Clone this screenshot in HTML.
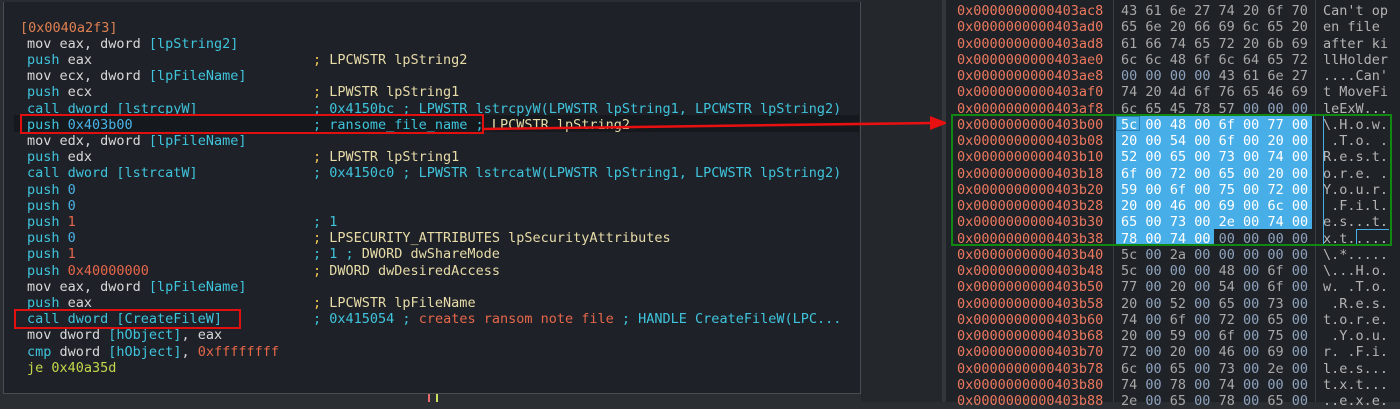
<!DOCTYPE html>
<html><head><meta charset="utf-8"><style>
html,body{margin:0;padding:0;}
body{width:1400px;height:402px;background:#2a2d31;position:relative;overflow:hidden;font-family:"DejaVu Sans Mono","Liberation Mono",monospace;font-size:13.5px;}
.panel{position:absolute;left:3px;top:2px;width:856px;height:391px;background:#1e2128;border:1px solid #4a4d52;border-top:none;}
.l{position:absolute;left:0;white-space:pre;line-height:16px;height:16px;color:#d8d8d8;}
.c{position:absolute;left:313px;white-space:pre;line-height:16px;color:#e8dca8;}
.cy{color:#3fc4dc}.w{color:#d8d8d8}.o{color:#e6674a}.y{color:#f0c850}.cr{color:#e8dca8}.b{color:#4ab3e6}.g{color:#c4d84a}
.hex{position:absolute;left:946px;top:0;width:454px;height:402px;background:#1f2226;}
.row{position:absolute;white-space:pre;line-height:16px;}
.a{left:957px;color:#ec7860}
.h{left:1121px;color:#a8a8a8}
.t{left:1323px;color:#b4b4b4}
.z{color:#8ea2be}
#code{position:absolute;left:0;top:2px;}
</style></head><body>
<div style="position:absolute;left:861px;top:0;width:82px;height:402px;background:#24272b"></div>
<div style="position:absolute;left:942px;top:0;width:4px;height:402px;background:#33363a"></div>
<div class="panel"></div>
<div style="position:absolute;left:14px;top:115px;width:845px;height:17px;background:#15181c"></div>
<div style="position:absolute;left:428px;top:394px;width:2px;height:8px;background:#e86a6a"></div>
<div style="position:absolute;left:436px;top:394px;width:2px;height:8px;background:#d0e060"></div>
<div id="code">
<div class="l" style="top:18px;left:20px;color:#e08050">[0x0040a2f3]</div>
<div class="l" style="top:34px;left:27px">mov eax, dword <span class="cy">[lpString2]</span></div>
<div class="l" style="top:50px;left:27px"><span class="cy">push</span> eax</div>
<div class="c" style="top:50px"><span class="y">;</span> LPCWSTR lpString2</div>
<div class="l" style="top:66px;left:27px">mov ecx, dword <span class="cy">[lpFileName]</span></div>
<div class="l" style="top:82px;left:27px"><span class="cy">push</span> ecx</div>
<div class="c" style="top:82px"><span class="y">;</span> LPWSTR lpString1</div>
<div class="l" style="top:99px;left:27px"><span class="cy">call dword [lstrcpyW]</span></div>
<div class="c cy" style="top:99px">; 0x4150bc ; LPWSTR lstrcpyW(LPWSTR lpString1, LPCWSTR lpString2)</div>
<div class="l" style="top:115px;left:27px"><span class="cy">push</span> <span class="b">0x403b00</span></div>
<div class="c" style="top:115px"><span class="cy">; ransome_file_name ;</span> LPCWSTR lpString2</div>
<div class="l" style="top:131px;left:27px">mov edx, dword <span class="cy">[lpFileName]</span></div>
<div class="l" style="top:147px;left:27px"><span class="cy">push</span> edx</div>
<div class="c" style="top:147px"><span class="y">;</span> LPWSTR lpString1</div>
<div class="l" style="top:163px;left:27px"><span class="cy">call dword [lstrcatW]</span></div>
<div class="c cy" style="top:163px">; 0x4150c0 ; LPWSTR lstrcatW(LPWSTR lpString1, LPCWSTR lpString2)</div>
<div class="l" style="top:180px;left:27px"><span class="cy">push</span> <span class="b">0</span></div>
<div class="l" style="top:196px;left:27px"><span class="cy">push</span> <span class="b">0</span></div>
<div class="l" style="top:212px;left:27px"><span class="cy">push</span> <span class="o">1</span></div>
<div class="c cy" style="top:212px">; 1</div>
<div class="l" style="top:228px;left:27px"><span class="cy">push</span> <span class="b">0</span></div>
<div class="c" style="top:228px"><span class="y">;</span> LPSECURITY_ATTRIBUTES lpSecurityAttributes</div>
<div class="l" style="top:244px;left:27px"><span class="cy">push</span> <span class="o">1</span></div>
<div class="c" style="top:244px"><span class="cy">; 1 ;</span> DWORD dwShareMode</div>
<div class="l" style="top:261px;left:27px"><span class="cy">push</span> <span class="o">0x40000000</span></div>
<div class="c" style="top:261px"><span class="y">;</span> DWORD dwDesiredAccess</div>
<div class="l" style="top:277px;left:27px">mov eax, dword <span class="cy">[lpFileName]</span></div>
<div class="l" style="top:293px;left:27px"><span class="cy">push</span> eax</div>
<div class="c" style="top:293px"><span class="y">;</span> LPCWSTR lpFileName</div>
<div class="l" style="top:309px;left:27px"><span class="cy">call dword [CreateFileW]</span></div>
<div class="c" style="top:309px"><span class="cy">; 0x415054 ;</span> <span class="o">creates ransom note file</span> <span class="cy">; HANDLE CreateFileW(LPC...</span></div>
<div class="l" style="top:325px;left:27px">mov dword <span class="cy">[hObject]</span>, eax</div>
<div class="l" style="top:342px;left:27px"><span class="cy">cmp</span> dword <span class="cy">[hObject]</span>, <span class="o">0xffffffff</span></div>
<div class="l g" style="top:358px;left:27px">je 0x40a35d</div>
</div>
<div style="position:absolute;left:20px;top:114px;width:460px;height:16px;border:2px solid #e01010"></div>
<div style="position:absolute;left:14px;top:309px;width:223px;height:16px;border:2px solid #e01010"></div>
<svg style="position:absolute;left:0;top:0" width="1400" height="402">
<line x1="484" y1="129" x2="932" y2="123" stroke="#e81010" stroke-width="2.5"/>
<polygon points="930,116 948,123 930,130" fill="#e81010"/>
</svg>

<div class="hex"></div>
<div style="position:absolute;left:1113px;top:0;width:1px;height:402px;background:#3a3d42"></div>
<div style="position:absolute;left:1315px;top:0;width:1px;height:402px;background:#3a3d42"></div>
<div style="position:absolute;left:1116px;top:116px;width:196px;height:113px;background:#47aee8"></div>
<div style="position:absolute;left:1116px;top:229px;width:98px;height:16px;background:#47aee8"></div>
<div style="position:absolute;left:1116px;top:116px;width:24px;height:15px;border:1px solid #2d7cb0;box-sizing:border-box"></div>
<div style="position:absolute;left:1323px;top:116px;width:1px;height:128px;background:#47aee8"></div>
<div style="position:absolute;left:1356px;top:229px;width:33px;height:16px;border-top:1px solid #47aee8;border-left:1px solid #47aee8;box-sizing:border-box"></div>
<div id="hx"></div>
<div style="position:absolute;left:951px;top:114px;width:437px;height:128px;border:2px solid #118811"></div>
<script>
var rows=[
["403ac8","43 61 6e 27 74 20 6f 70","Can't op"],
["403ad0","65 6e 20 66 69 6c 65 20","en file "],
["403ad8","61 66 74 65 72 20 6b 69","after ki"],
["403ae0","6c 6c 48 6f 6c 64 65 72","llHolder"],
["403ae8","00 00 00 00 43 61 6e 27","....Can'"],
["403af0","74 20 4d 6f 76 65 46 69","t MoveFi"],
["403af8","6c 65 45 78 57 00 00 00","leExW..."],
["403b00","5c 00 48 00 6f 00 77 00","\\.H.o.w."],
["403b08","20 00 54 00 6f 00 20 00"," .T.o. ."],
["403b10","52 00 65 00 73 00 74 00","R.e.s.t."],
["403b18","6f 00 72 00 65 00 20 00","o.r.e. ."],
["403b20","59 00 6f 00 75 00 72 00","Y.o.u.r."],
["403b28","20 00 46 00 69 00 6c 00"," .F.i.l."],
["403b30","65 00 73 00 2e 00 74 00","e.s...t."],
["403b38","78 00 74 00 00 00 00 00","x.t....."],
["403b40","5c 00 2a 00 00 00 00 00","\\.*....."],
["403b48","5c 00 00 00 48 00 6f 00","\\...H.o."],
["403b50","77 00 20 00 54 00 6f 00","w. .T.o."],
["403b58","20 00 52 00 65 00 73 00"," .R.e.s."],
["403b60","74 00 6f 00 72 00 65 00","t.o.r.e."],
["403b68","20 00 59 00 6f 00 75 00"," .Y.o.u."],
["403b70","72 00 20 00 46 00 69 00","r. .F.i."],
["403b78","6c 00 65 00 73 00 2e 00","l.e.s..."],
["403b80","74 00 78 00 74 00 00 00","t.x.t..."],
["403b88","2e 00 65 00 78 00 65 00","..e.x.e."]];
var h="";
rows.forEach(function(r,i){
 var top=3+i*16.25;
 var bytes=r[1].split(" ");
 var hs=bytes.map(function(b,j){
   var sel=(i>=7&&i<=13)||(i==14&&j<4);
   if(sel) return '<span style="color:#fff">'+b+'</span>';
   return b=="00"?'<span class="z">'+b+'</span>':b;}).join(" ");
 var t=r[2].replace(/&/g,"&amp;").replace(/</g,"&lt;");
 h+='<div class="row a" style="top:'+top+'px">0x0000000000'+r[0]+'</div>';
 h+='<div class="row h" style="top:'+top+'px">'+hs+'</div>';
 h+='<div class="row t" style="top:'+top+'px">'+t+'</div>';
});
document.getElementById("hx").innerHTML=h;
</script>
</body></html>
